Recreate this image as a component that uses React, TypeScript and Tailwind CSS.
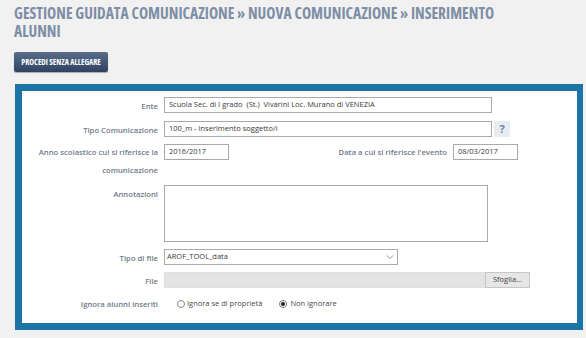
const labelCls =
  "w-[136px] shrink-0 text-right text-[7.7px] leading-[18px] font-semibold text-[#6f7b88]";
const boxCls = "h-4 border border-[#a9a9a9] bg-white text-[7.5px] text-[#3a3a3a] px-1 flex items-center";

const Row = ({ label, children, className = "" }: { label: string; children: React.ReactNode; className?: string }) => (
  <div className={"flex items-start gap-[6px] " + className}>
    <div className={labelCls}>{label}</div>
    {children}
  </div>
);

const App = () => {
  return (
    <div className="w-[586px] h-[338px] overflow-hidden bg-[#f1f1f1] font-['Open_Sans',sans-serif]">
      <h1 className="w-[520px] pl-[14px] pt-[4px] text-[15.5px] leading-[18px] font-bold uppercase text-[#7d8ea6] font-stretch-semi-condensed">
        Gestione guidata comunicazione » Nuova comunicazione » Inserimento alunni
      </h1>
      <button className="ml-[14px] mt-[12px] h-5 w-[94px] rounded-[2px] bg-gradient-to-b from-[#5a6e8c] to-[#2f4262] text-[8px] font-bold uppercase text-white font-stretch-condensed shadow-[0_1px_1px_rgba(0,0,0,0.3)]">
        Procedi senza allegare
      </button>
      <div className="ml-[15px] mr-[3px] mt-[12px] h-[246px] border-[7px] border-r-[6px] border-[#1b73a6] bg-white">
        <div className="pt-[6px]">
          <Row label="Ente">
            <div className={boxCls + " w-[328px]"}>Scuola Sec. di I grado&nbsp; (St.)&nbsp; Vivarini Loc. Murano di VENEZIA</div>
          </Row>
          <Row label="Tipo Comunicazione" className="mt-[6px]">
            <div className={boxCls + " w-[328px]"}>100_m - Inserimento soggetto/i</div>
            <div className="-ml-[4px] flex h-4 w-4 items-center justify-center bg-[#e7ecf2] text-[11px] font-bold text-[#71849e]">?</div>
          </Row>
          <div className="mt-[5px] flex items-start">
            <div className="flex items-start gap-[6px]">
              <div className={labelCls + " -mt-[1px]"}>Anno scolastico cui si riferisce la comunicazione</div>
              <div className={boxCls + " w-[65px]"}>2016/2017</div>
            </div>
            <div className="ml-auto mr-[59px] flex items-start gap-[6px]">
              <div className="text-[7.7px] leading-[16px] font-semibold text-[#6f7b88]">Data a cui si riferisce l'evento</div>
              <div className={boxCls + " w-[65px]"}>08/03/2017</div>
            </div>
          </div>
          <Row label="Annotazioni" className="mt-[6px]">
            <div className="h-[57px] w-[324px] border border-[#a9a9a9] bg-white" />
          </Row>
          <Row label="Tipo di file" className="mt-[7px]">
            <div className={boxCls + " w-[234px] justify-between !px-[2px]"}>
              <span>AROF_TOOL_data</span>
              <svg width="8" height="6" viewBox="0 0 8 6" className="mr-[1px]">
                <path d="M1 1.5 L4 4.5 L7 1.5" fill="none" stroke="#777" strokeWidth="0.8" />
              </svg>
            </div>
          </Row>
          <Row label="File" className="mt-[5px]">
            <div className="flex">
              <div className="h-4 w-[321px] border border-[#e0e0e0] bg-[#e4e4e4]" />
              <div className="flex h-4 w-[45px] items-center justify-center border border-[#c6c6c6] bg-[#e6e6e6] text-[7.5px] text-[#444]">
                Sfoglia...
              </div>
            </div>
          </Row>
          <Row label="Ignora alunni inseriti" className="mt-[5px]">
            <div className="flex h-[18px] items-center pl-[13px] text-[7.5px] text-[#4a4a4a]">
              <span className="h-[8px] w-[8px] rounded-full border border-[#888] bg-white" />
              <span className="ml-[2px]">Ignora se di proprietà</span>
              <span className="ml-[17px] flex h-[8px] w-[8px] items-center justify-center rounded-full border border-[#777] bg-white">
                <span className="h-[4px] w-[4px] rounded-full bg-[#222]" />
              </span>
              <span className="ml-[3px]">Non ignorare</span>
            </div>
          </Row>
        </div>
      </div>
    </div>
  );
};

export default App;
